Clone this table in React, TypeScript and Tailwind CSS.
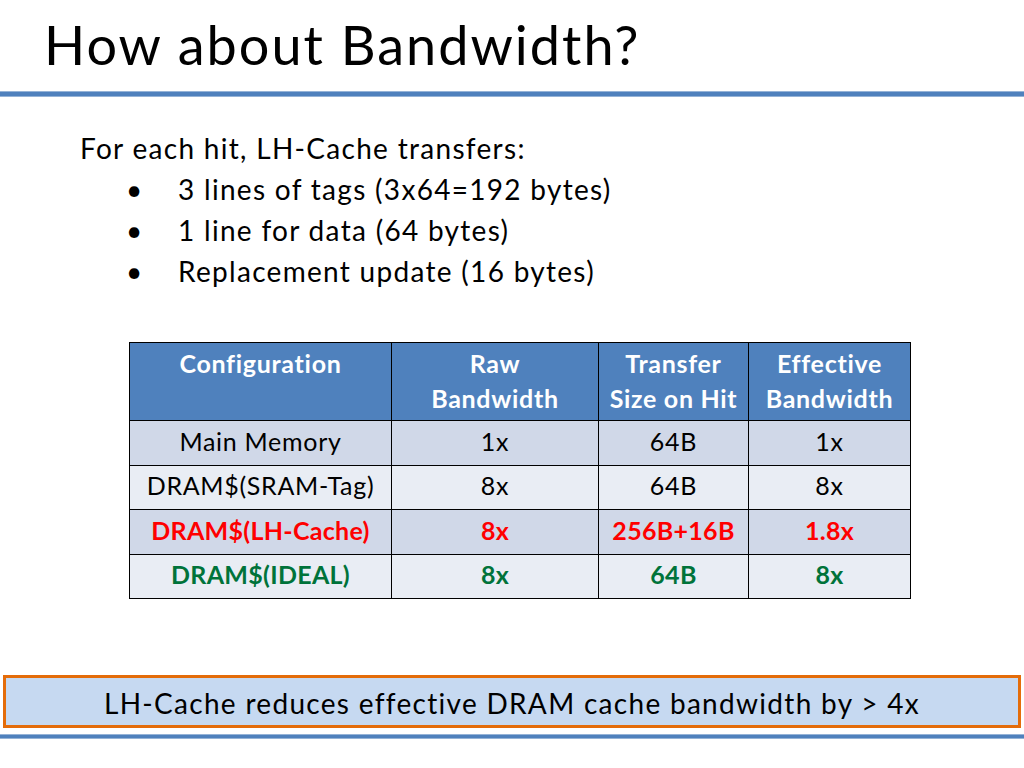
import React from "react";

const rows = [
  { cells: ["Main Memory", "1x", "64B", "1x"], bg: "bg-[#d0d8e8]", color: "text-black", bold: false },
  { cells: ["DRAM$(SRAM-Tag)", "8x", "64B", "8x"], bg: "bg-[#e9edf4]", color: "text-black", bold: false },
  { cells: ["DRAM$(LH-Cache)", "8x", "256B+16B", "1.8x"], bg: "bg-[#d0d8e8]", color: "text-[#ff0000]", bold: true },
  { cells: ["DRAM$(IDEAL)", "8x", "64B", "8x"], bg: "bg-[#e9edf4]", color: "text-[#00733a]", bold: true },
];

export default function App() {
  return (
    <div className="w-[1024px] h-[768px] bg-white relative overflow-hidden" style={{ fontFamily: "Lato, 'Open Sans', sans-serif" }}>
      <div className="h-[91px] pl-[44px] pt-[12px]">
        <h1 className="text-[54px] leading-[66px] tracking-[2px] text-black">How about Bandwidth?</h1>
      </div>
      <div className="h-[6px] border-y border-[#95b3d7] bg-[#4f81bd]" />
      <div className="pl-[80px] pt-[31px] text-[28px] leading-[41px] tracking-[1.3px] text-black">
        <div>For each hit, LH-Cache transfers:</div>
        {["3 lines of tags (3x64=192 bytes)", "1 line for data (64 bytes)", "Replacement update (16 bytes)"].map((t) => (
          <div key={t} className="flex">
            <span className="w-[98px] pl-[46px]">•</span>
            <span>{t}</span>
          </div>
        ))}
      </div>
      <div className="pl-[129px] pt-[50px]">
        <table className="border-collapse text-[25px] tracking-[0.7px] text-center w-[782px]">
          <thead>
            <tr className="bg-[#4f81bd] text-white font-bold h-[78px]">
              <th className="border border-black w-[262px] align-top pt-[3px] leading-[35px] font-bold">Configuration</th>
              <th className="border border-black w-[207px] align-top pt-[3px] leading-[35px] font-bold">Raw<br />Bandwidth</th>
              <th className="border border-black w-[150px] align-top pt-[3px] leading-[35px] font-bold">Transfer<br />Size on Hit</th>
              <th className="border border-black w-[162px] align-top pt-[3px] leading-[35px] font-bold">Effective<br />Bandwidth</th>
            </tr>
          </thead>
          <tbody>
            {rows.map((r, i) => (
              <tr key={i} className={`${r.bg} ${r.color} ${r.bold ? "font-bold tracking-[0.3px]" : ""} h-[44.5px]`}>
                {r.cells.map((c, j) => (
                  <td key={j} className="border border-black leading-[28px] pb-[4px]">{c}</td>
                ))}
              </tr>
            ))}
          </tbody>
        </table>
      </div>
      <div className="absolute left-[3px] top-[675px] w-[1018px] h-[53px] border-[3px] border-[#e46c0a] bg-[#c6d9f1] flex items-center justify-center text-[28px] tracking-[1.3px] text-black pt-[3px]">
        LH-Cache reduces effective DRAM cache bandwidth by &gt; 4x
      </div>
      <div className="absolute left-0 top-[734px] w-full h-[5px] border-y border-[#95b3d7] bg-[#4f81bd]" />
    </div>
  );
}
